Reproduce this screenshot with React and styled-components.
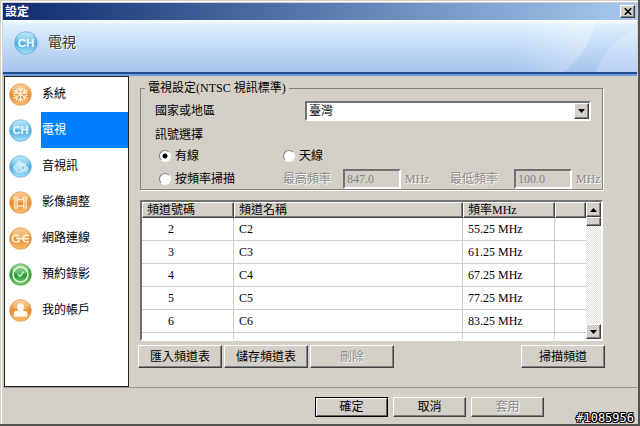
import React, { useState } from "react";
import styled, { createGlobalStyle, css } from "styled-components";

const GlobalStyle = createGlobalStyle`
  * { box-sizing: border-box; }
  body {
    margin: 0;
    background: #d4d0c8;
    font-family: "Liberation Serif", "Noto Sans CJK TC", serif;
    font-size: 12px;
    line-height: 16px;
    color: #000;
  }
  button, input, select { font: inherit; color: inherit; margin: 0; }
`;

const raised = css`
  border: 1px solid;
  border-color: #fff #404040 #404040 #fff;
  box-shadow: inset -1px -1px 0 #808080;
  background: #d4d0c8;
`;

const sunken = css`
  border: 2px solid;
  border-color: #707070 #fff #fff #707070;
`;

const etched = css`
  color: #8a8a88;
  text-shadow: 1px 1px 0 #fff;
`;

const Dialog = styled.div`
  position: relative;
  display: flex;
  flex-direction: column;
  height: 100vh;
  min-height: 400px;
  padding: 3px;
  background: #d4d0c8;
  box-shadow: inset -2px -2px 0 #55534f, inset 1px 1px 0 #d4d0c8, inset 2px 2px 0 #fff;
`;

const TitleBar = styled.header`
  display: flex;
  align-items: center;
  justify-content: space-between;
  height: 17px;
  padding: 0 2px;
  background: linear-gradient(90deg, #0f2a6e, #a6caf0);
  color: #fff;
  font-weight: bold;
`;

const CloseBtn = styled.button`
  ${raised}
  display: flex;
  align-items: center;
  justify-content: center;
  width: 15px;
  height: 13px;
  padding: 0;
`;

const Banner = styled.div`
  position: relative;
  display: flex;
  align-items: center;
  gap: 10px;
  height: 56px;
  padding: 0 0 10px 11px;
  background: linear-gradient(180deg, #fdfeff 0, #dceefb 5px, #c4dbf6 26px, #a8c5f0 52px, #1f4a8e 52px, #1f4a8e 54px, #6f9fd6 54px);
`;

const BannerTitle = styled.h1`
  margin: 0;
  font-size: 14px;
  line-height: 18px;
  font-weight: normal;
  color: #333;
  text-shadow: 1px 1px 0 #fff;
`;

const Swoosh = styled.svg`
  position: absolute;
  top: 1px;
  right: 0;
`;

const Main = styled.main`
  display: flex;
  flex: 1;
  min-height: 0;
`;

const Sidebar = styled.nav`
  width: 125px;
  margin-left: 1px;
  padding: 0 1px;
  background: #fff;
  box-shadow: inset 0 0 0 1px #222;
`;

const NavBtn = styled.button`
  display: flex;
  align-items: center;
  gap: 9px;
  width: 100%;
  height: 36px;
  padding: 0 0 0 4px;
  border: none;
  background: transparent;
  text-align: left;
`;

const NavLabel = styled.span`
  flex: 1;
  padding: 10px 1px;
  background: ${(p) => (p.$active ? "#0080ff" : "transparent")};
  color: ${(p) => (p.$active ? "#fff" : "#000")};
`;

const Content = styled.section`
  display: flex;
  flex: 1;
  flex-direction: column;
  min-width: 0;
  padding: 4px 32px 19px 9px;
`;

const Group = styled.fieldset`
  display: flex;
  flex-direction: column;
  gap: 6px;
  min-width: 0;
  margin: 0 2px 10px;
  padding: 5px 0 0 14px;
  border: 1px solid #85837e;
  box-shadow: 1px 1px 0 #fff;
`;

const Legend = styled.legend`
  margin-left: -10px;
  padding: 0 3px;
`;

const CountryRow = styled.div`
  display: grid;
  grid-template-columns: 150px 1fr;
  align-items: center;
  margin-right: 11px;
`;

const Combo = styled.div`
  ${sunken}
  display: flex;
  height: 20px;
  background: #fff;
`;

const Select = styled.select`
  flex: 1;
  min-width: 0;
  padding: 0 2px;
  border: none;
  outline: none;
  appearance: none;
  background: #fff;
`;

const ArrowBox = styled.span`
  ${raised}
  display: flex;
  align-items: center;
  justify-content: center;
  flex: none;
  width: 15px;
  height: ${(p) => p.$height || 16}px;
`;

const SignalRow = styled.div`
  display: grid;
  grid-template-columns: ${(p) => p.$columns};
  align-items: center;
  padding-left: 4px;
  line-height: 14px;
`;

const RadioLabel = styled.label`
  display: flex;
  align-items: center;
  gap: 4px;
`;

const Radio = styled.input`
  width: 12px;
  height: 12px;
  border: 1px solid;
  border-color: #808080 #fff #fff #808080;
  border-radius: 50%;
  appearance: none;
  background: #fff;
  &:checked { background: radial-gradient(circle, #000 2px, #fff 3px); }
`;

const DimText = styled.label`
  ${etched}
`;

const FreqInput = styled.input`
  ${sunken}
  width: 58px;
  height: 20px;
  padding: 0 2px;
  background: #d4d0c8;
  color: #808080;
`;

const List = styled.div`
  ${sunken}
  display: flex;
  flex: 1;
  min-height: 0;
  margin: 0 2px 4px;
  overflow: hidden;
  background: #fff;
`;

const TableWrap = styled.div`
  flex: 1;
  min-width: 0;
  overflow: hidden;
`;

const Table = styled.table`
  width: 100%;
  border-collapse: separate;
  border-spacing: 0;
  table-layout: fixed;
`;

const Th = styled.th`
  ${raised}
  width: ${(p) => p.$width || "auto"};
  height: 16px;
  padding: 0 4px;
  font-weight: normal;
  line-height: 14px;
  text-align: left;
`;

const Td = styled.td`
  height: 23px;
  padding: 0 5px 0 ${(p) => (p.$indent ? 26 : 5)}px;
  border-right: 1px solid #d0cdc8;
  border-bottom: 1px solid #d0cdc8;
  line-height: 16px;
  &:last-child { border-right: none; }
`;

const ScrollBar = styled.div`
  display: flex;
  flex-direction: column;
  width: 15px;
  background: repeating-conic-gradient(#e0ddd7 0 25%, #fff 0 50%) 0 0 / 2px 2px;
`;

const Thumb = styled.div`
  ${raised}
  height: 9px;
`;

const Spacer = styled.div`
  flex: 1;
`;

const Actions = styled.div`
  display: flex;
  gap: 2px;
`;

const Btn = styled.button`
  ${raised}
  width: ${(p) => p.$width || 84}px;
  height: ${(p) => p.$height || 23}px;
  padding: 0;
  line-height: 16px;
  &:disabled { ${etched} }
  ${(p) =>
        p.$default &&
        css`
      border-color: #000;
      box-shadow: inset 1px 1px 0 #fff, inset -1px -1px 0 #606060;
    `}
`;

const Footer = styled.footer`
  display: flex;
  justify-content: flex-end;
  gap: 5px;
  height: 36px;
  padding: 9px 93px 0 0;
  border-top: 1px solid #999792;
`;

const Stamp = styled.span`
  position: absolute;
  right: 6px;
  bottom: 0;
  font-family: "DejaVu Sans Mono", monospace;
  font-size: 12px;
  color: #fff;
  text-shadow: -1px -1px 0 #000, 0 -1px 0 #000, 1px -1px 0 #000, -1px 0 0 #000,
    1px 0 0 #000, -1px 1px 0 #000, 0 1px 0 #000, 1px 1px 0 #000;
`;

const TONES = {
    orange: ["#f8c070", "#eb9036", "#c97a30"],
    blue: ["#a5e2f8", "#55b0e4", "#4a8fc0"],
    green: ["#7ed070", "#2c9c38", "#2d8a35"],
};

const GLYPHS = {
    system: (
        <g fill="none" stroke="#fff2dc" strokeWidth="1.3" strokeLinecap="round">
            {[0, 60, 120, 180, 240, 300].map((a) => (
                <path key={a} transform={`rotate(${a} 12 12)`} d="M12 12V4.4M9.4 5.6l2.6 2.6 2.6-2.6" />
            ))}
        </g>
    ),
    tv: (
        <text x="12" y="16" textAnchor="middle" fill="#eefaff" fontFamily="Liberation Sans, sans-serif" fontSize="11.5" fontWeight="bold">
            CH
        </text>
    ),
    av: (
        <g fill="#d8f1fc" stroke="#fff" strokeWidth=".6">
            <path d="M4.5 12.5l6-6.5 4.5 3-2.5 5-6.5 1.5z" opacity=".8" />
            <path d="M12 10l4.5-1.5 3.5 5.5-2 3h-5z" opacity=".8" />
            <path d="M6 15.5h7l2 3H8z" opacity=".6" />
            <circle cx="14.5" cy="13.5" r="1.5" fill="#5aaede" />
        </g>
    ),
    image: (
        <g fill="none" stroke="#fff0d8" strokeWidth="1.2">
            <path d="M6 6v12.4M18 6v12.4M8.6 6v12.4M15.4 6v12.4M8.6 8.6h6.8M8.6 15.8h6.8" />
            <path d="M6 6.6h2.6M6 9.6h2.6M6 12.4h2.6M6 15.2h2.6M6 17.8h2.6M15.4 6.6H18M15.4 9.6H18M15.4 12.4H18M15.4 15.2H18M15.4 17.8H18" strokeWidth=".8" />
        </g>
    ),
    network: (
        <g fill="none" stroke="#fff0d8" strokeWidth="1.8">
            <path d="M10.4 8.8H5.6L3.6 10.8v2.6l2 2H10.4V11.8H7.4M21 8.8h-4.4l-1.6 1.6v3.4l1.6 1.6H21M10.4 12.1H15M16 12.1h4.6" />
        </g>
    ),
    schedule: (
        <g fill="none" stroke="#e6fbe2">
            <circle cx="12" cy="12" r="7.8" strokeWidth="1.7" />
            <path d="M8.8 11.6l2.8 2.4 4-5" strokeWidth="1.3" />
        </g>
    ),
    account: (
        <path
            d="M12 4.2a3.8 3.8 0 0 1 3.4 5.4c-.4.9-.9 1.6-.9 2.4l3.6.8.9 1.2v4.4H5V14l.9-1.2 3.6-.8c0-.8-.5-1.5-.9-2.4A3.8 3.8 0 0 1 12 4.2z"
            fill="#fff8ec"
        />
    ),
};

const Orb = ({ name, tone, size = 23 }) => {
    const [light, dark, edge] = TONES[tone];
    const id = `orb-${name}-${size}`;
    return (
        <svg width={size} height={size} viewBox="0 0 24 24" aria-hidden="true">
            <defs>
                <linearGradient id={id} x1="0" y1="0" x2="0" y2="1">
                    <stop offset="0" stopColor={light} />
                    <stop offset=".55" stopColor={dark} />
                    <stop offset="1" stopColor={light} />
                </linearGradient>
            </defs>
            <circle cx="12" cy="12" r="11.3" fill={`url(#${id})`} stroke={edge} strokeOpacity=".6" strokeWidth=".9" />
            <ellipse cx="12" cy="6.4" rx="8.4" ry="5" fill="#fff" opacity=".22" />
            {GLYPHS[name]}
        </svg>
    );
};

const Arrow = ({ up }) => (
    <svg width="7" height="4" viewBox="0 0 7 4" aria-hidden="true">
        <path d={up ? "M0 4h7L3.5 0z" : "M0 0h7L3.5 4z"} />
    </svg>
);

const SECTIONS = [
    { id: "system", label: "系統", tone: "orange" },
    { id: "tv", label: "電視", tone: "blue" },
    { id: "av", label: "音視訊", tone: "blue" },
    { id: "image", label: "影像調整", tone: "orange" },
    { id: "network", label: "網路連線", tone: "orange" },
    { id: "schedule", label: "預約錄影", tone: "green" },
    { id: "account", label: "我的帳戶", tone: "orange" },
];

const CHANNELS = [
    { no: 2, name: "C2", freq: "55.25 MHz" },
    { no: 3, name: "C3", freq: "61.25 MHz" },
    { no: 4, name: "C4", freq: "67.25 MHz" },
    { no: 5, name: "C5", freq: "77.25 MHz" },
    { no: 6, name: "C6", freq: "83.25 MHz" },
];

const App = () => {
    const [section, setSection] = useState("tv");
    const [signal, setSignal] = useState("cable");

    const radio = (value, label) => (
        <RadioLabel>
            <Radio type="radio" name="signal" checked={signal === value} onChange={() => setSignal(value)} />
            {label}
        </RadioLabel>
    );

    return (
        <>
            <GlobalStyle />
            <Dialog>
                <TitleBar>
                    <span>設定</span>
                    <CloseBtn aria-label="關閉">
                        <svg width="8" height="7" viewBox="0 0 8 7" aria-hidden="true">
                            <path d="M.8.3l6.4 6.4M7.2.3L.8 6.7" stroke="#000" strokeWidth="1.6" />
                        </svg>
                    </CloseBtn>
                </TitleBar>

                <Banner>
                    <Swoosh width="120" height="51" viewBox="0 0 120 51" aria-hidden="true">
                        <defs>
                            <linearGradient id="sweep" x1="0" y1="0" x2="1" y2="0">
                                <stop offset="0" stopColor="#fff" stopOpacity="0" />
                                <stop offset="1" stopColor="#fff" stopOpacity=".35" />
                            </linearGradient>
                        </defs>
                        <path d="M0 0h79C74 20 64 38 46 51H0z" fill="url(#sweep)" />
                        <path d="M120 8C100 16 86 30 79 51h41z" fill="#fff" opacity=".2" />
                    </Swoosh>
                    <Orb name="tv" tone="blue" size={24} />
                    <BannerTitle>電視</BannerTitle>
                </Banner>

                <Main>
                    <Sidebar>
                        {SECTIONS.map((s) => (
                            <NavBtn key={s.id} onClick={() => setSection(s.id)}>
                                <Orb name={s.id} tone={s.tone} />
                                <NavLabel $active={section === s.id}>{s.label}</NavLabel>
                            </NavBtn>
                        ))}
                    </Sidebar>

                    <Content>
                        <Group>
                            <Legend>電視設定(NTSC 視訊標準)</Legend>
                            <CountryRow>
                                <label htmlFor="country">國家或地區</label>
                                <Combo>
                                    <Select id="country" defaultValue="tw">
                                        <option value="tw">臺灣</option>
                                    </Select>
                                    <ArrowBox><Arrow /></ArrowBox>
                                </Combo>
                            </CountryRow>
                            <div>訊號選擇</div>
                            <SignalRow $columns="124px 1fr">
                                {radio("cable", "有線")}
                                {radio("antenna", "天線")}
                            </SignalRow>
                            <SignalRow $columns="124px 60px 62px 45px 64px 62px 1fr">
                                {radio("scan", "按頻率掃描")}
                                <DimText htmlFor="max-freq">最高頻率</DimText>
                                <FreqInput id="max-freq" defaultValue="847.0" disabled />
                                <DimText as="span">MHz</DimText>
                                <DimText htmlFor="min-freq">最低頻率</DimText>
                                <FreqInput id="min-freq" defaultValue="100.0" disabled />
                                <DimText as="span">MHz</DimText>
                            </SignalRow>
                        </Group>

                        <List>
                            <TableWrap>
                                <Table>
                                    <thead>
                                        <tr>
                                            <Th $width="92px">頻道號碼</Th>
                                            <Th>頻道名稱</Th>
                                            <Th $width="92px">頻率MHz</Th>
                                            <Th $width="31px" />
                                        </tr>
                                    </thead>
                                    <tbody>
                                        {CHANNELS.map((c) => (
                                            <tr key={c.no}>
                                                <Td $indent>{c.no}</Td>
                                                <Td>{c.name}</Td>
                                                <Td>{c.freq}</Td>
                                                <Td />
                                            </tr>
                                        ))}
                                        <tr>
                                            <Td />
                                            <Td />
                                            <Td />
                                            <Td />
                                        </tr>
                                    </tbody>
                                </Table>
                            </TableWrap>
                            <ScrollBar>
                                <ArrowBox $height={15}><Arrow up /></ArrowBox>
                                <Thumb />
                                <Spacer />
                                <ArrowBox $height={15}><Arrow /></ArrowBox>
                            </ScrollBar>
                        </List>

                        <Actions>
                            <Btn>匯入頻道表</Btn>
                            <Btn>儲存頻道表</Btn>
                            <Btn disabled>刪除</Btn>
                            <Spacer />
                            <Btn>掃描頻道</Btn>
                        </Actions>
                    </Content>
                </Main>

                <Footer>
                    <Btn $width={73} $height={20} $default>確定</Btn>
                    <Btn $width={73} $height={20}>取消</Btn>
                    <Btn $width={73} $height={20} disabled>套用</Btn>
                </Footer>
                <Stamp>#1085956</Stamp>
            </Dialog>
        </>
    );
};

export default App;
